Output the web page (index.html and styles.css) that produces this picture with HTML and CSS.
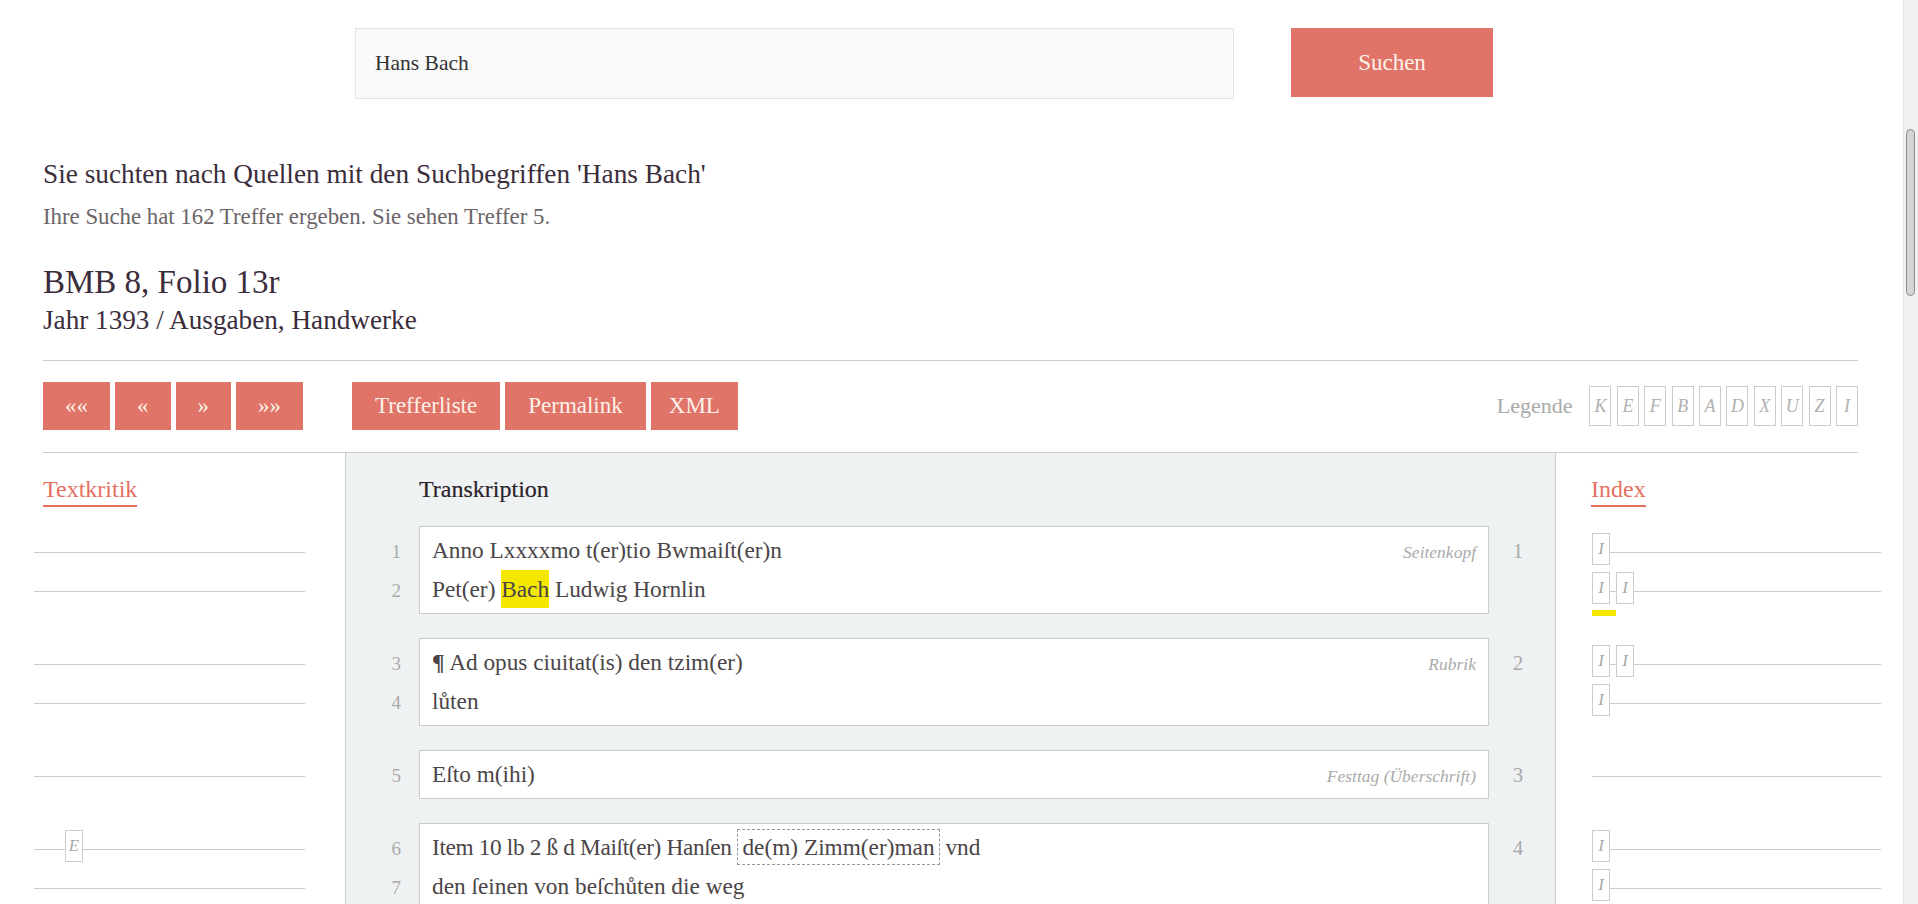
FILE: index.html
```html
<!DOCTYPE html>
<html lang="de">
<head>
<meta charset="utf-8">
<title>BMB 8, Folio 13r</title>
<link rel="stylesheet" href="styles.css">
</head>
<body>
<div class="page">
  <form class="search">
    <input class="search-field" type="text" value="Hans Bach">
    <button class="search-btn" type="button">Suchen</button>
  </form>

  <h1 class="query">Sie suchten nach Quellen mit den Suchbegriffen 'Hans Bach'</h1>
  <p class="hits">Ihre Suche hat 162 Treffer ergeben. Sie sehen Treffer 5.</p>

  <h2 class="doc-title">BMB 8, Folio 13r</h2>
  <p class="doc-sub">Jahr 1393 / Ausgaben, Handwerke</p>

  <div class="rule"></div>

  <div class="toolbar">
    <div class="btn-group">
      <a class="btn">««</a>
      <a class="btn">«</a>
      <a class="btn">»</a>
      <a class="btn">»»</a>
    </div>
    <div class="btn-group actions">
      <a class="btn">Trefferliste</a>
      <a class="btn">Permalink</a>
      <a class="btn btn-narrow">XML</a>
    </div>
    <div class="legend">
      <span class="legend-label">Legende</span>
      <div class="legend-boxes">
        <span class="legend-box">K</span>
        <span class="legend-box">E</span>
        <span class="legend-box">F</span>
        <span class="legend-box">B</span>
        <span class="legend-box">A</span>
        <span class="legend-box">D</span>
        <span class="legend-box">X</span>
        <span class="legend-box">U</span>
        <span class="legend-box">Z</span>
        <span class="legend-box">I</span>
      </div>
    </div>
  </div>

  <div class="edition">
    <!-- header row -->
    <div class="head side"><span class="tab">Textkritik</span></div>
    <div class="head middle"><span class="tr-title">Transkription</span></div>
    <div class="head side idx"><span class="tab">Index</span></div>

    <!-- segment 1 -->
    <div class="seg-side">
      <div class="tk-row"></div>
      <div class="tk-row"></div>
    </div>
    <div class="seg-mid">
      <div class="ln"><span>1</span><br><span>2</span></div>
      <div class="box">
        <div class="label"><span>Seitenkopf</span></div>
        Anno Lxxxxmo t(er)tio Bwmaiſt(er)n<br>
        Pet(er) <span class="hit">Bach</span> Ludwig Hornlin
      </div>
      <div class="rn"><span>1</span></div>
    </div>
    <div class="seg-side idx">
      <div class="ix-row"><span class="mark">I</span></div>
      <div class="ix-row"><span class="mark">I</span><span class="mark">I</span><span class="hit-bar"></span></div>
    </div>

    <!-- segment 2 -->
    <div class="seg-side">
      <div class="tk-row"></div>
      <div class="tk-row"></div>
    </div>
    <div class="seg-mid">
      <div class="ln"><span>3</span><br><span>4</span></div>
      <div class="box">
        <div class="label"><span>Rubrik</span></div>
        <span class="pilcrow">¶</span> Ad opus ciuitat(is) den tzim(er)<br>
        lůten
      </div>
      <div class="rn"><span>2</span></div>
    </div>
    <div class="seg-side idx">
      <div class="ix-row"><span class="mark">I</span><span class="mark">I</span></div>
      <div class="ix-row"><span class="mark">I</span></div>
    </div>

    <!-- segment 3 -->
    <div class="seg-side">
      <div class="tk-row"></div>
    </div>
    <div class="seg-mid">
      <div class="ln"><span>5</span></div>
      <div class="box">
        <div class="label"><span>Festtag (Überschrift)</span></div>
        Eſto m(ihi)
      </div>
      <div class="rn"><span>3</span></div>
    </div>
    <div class="seg-side idx">
      <div class="ix-row"></div>
    </div>

    <!-- segment 4 -->
    <div class="seg-side">
      <div class="tk-row"><span class="mark mark-e">E</span></div>
      <div class="tk-row"></div>
    </div>
    <div class="seg-mid">
      <div class="ln"><span>6</span><br><span>7</span></div>
      <div class="box">
        <span class="tight">Item 10 lb 2 ß d Maiſt(er) Hanſen</span> <span class="person">de(m) Zimm(er)man</span> vnd<br>
        den ſeinen von beſchůten die weg
      </div>
      <div class="rn"><span>4</span></div>
    </div>
    <div class="seg-side idx">
      <div class="ix-row"><span class="mark">I</span></div>
      <div class="ix-row"><span class="mark">I</span></div>
    </div>
  </div>
</div>
<div class="scrollbar"><div class="thumb"></div></div>
</body>
</html>
```
FILE: styles.css
```css
html, body {
  margin: 0;
  height: 904px;
  overflow: hidden;
}
body {
  display: flex;
  background: #fff;
  font-family: "Liberation Serif", "Times New Roman", serif;
  color: #3b2d3b;
}
.page {
  flex: 1;
  min-width: 0;
  padding: 28px 45px 0 43px;
}

/* search */
.search {
  display: flex;
  align-items: flex-start;
  gap: 57px;
  padding-left: 312px;
  margin: 0;
}
.search-field {
  width: 879px;
  height: 71px;
  box-sizing: border-box;
  border: 1px solid #e3e3e3;
  background: #f9f9f9;
  padding: 0 19px;
  font-family: "Liberation Serif", serif;
  font-size: 21.5px;
  color: #333;
  outline: none;
  margin: 0;
}
.search-btn {
  width: 202px;
  height: 69px;
  border: 0;
  background: #e07468;
  color: #fdf1e8;
  font-family: "Liberation Serif", serif;
  font-size: 23px;
  margin: 0;
  padding: 0;
}

/* headings */
.query {
  margin: 57px 0 0;
  font-size: 27.3px;
  line-height: 36px;
  font-weight: normal;
  color: #3b2d3b;
}
.hits {
  margin: 10px 0 0;
  font-size: 22.8px;
  line-height: 30px;
  color: #6b6568;
}
.doc-title {
  margin: 30px 0 0;
  font-size: 33px;
  line-height: 40px;
  font-weight: normal;
}
.doc-sub {
  margin: 0;
  font-size: 27.2px;
  line-height: 36px;
}
.rule {
  height: 1px;
  background: #cccccc;
  margin-top: 22px;
}

/* toolbar */
.toolbar {
  display: flex;
  align-items: center;
  margin: 21px 0 22px;
  height: 48px;
}
.btn-group {
  display: flex;
  gap: 5px;
}
.actions {
  margin-left: 49px;
}
.btn {
  display: flex;
  align-items: center;
  justify-content: center;
  height: 48px;
  padding: 0 22px;
  background: #e07468;
  color: #fdf1e8;
  font-size: 23px;
  white-space: nowrap;
}
.actions .btn {
  padding: 0 23px;
}
.actions .btn-narrow {
  padding: 0 18px;
}
.legend {
  margin-left: auto;
  display: flex;
  align-items: center;
}
.legend-label {
  font-size: 22px;
  color: #aaaaaa;
  margin-right: 17px;
}
.legend-boxes {
  display: flex;
  gap: 5.4px;
}
.legend-box {
  width: 22px;
  height: 40px;
  box-sizing: border-box;
  border: 1px solid #cccccc;
  display: flex;
  align-items: center;
  justify-content: center;
  font-style: italic;
  font-size: 18px;
  color: #b0b0b0;
}

/* edition grid */
.edition {
  display: grid;
  grid-template-columns: 302px 1211px 302px;
  border-top: 1px solid #cccccc;
}
.head {
  height: 73px;
  box-sizing: border-box;
  padding-top: 21px;
}
.side.idx, .seg-side.idx {
  padding-left: 35px;
}
.tab {
  display: inline-block;
  font-size: 24px;
  line-height: 30px;
  color: #e5705f;
  border-bottom: 2px solid #e5705f;
  padding-bottom: 1px;
}
.middle, .seg-mid {
  background: #eff2f3;
  border-left: 1px solid #cccccc;
  border-right: 1px solid #cccccc;
}
.head.middle {
  padding-left: 73px;
}
.tr-title {
  font-size: 24px;
  line-height: 30px;
  color: #2a2329;
  -webkit-text-stroke: 0.2px #2a2329;
}

.seg-mid {
  display: flex;
  align-items: flex-start;
  padding-bottom: 24px;
}
.ln {
  width: 55px;
  flex: none;
  text-align: right;
  padding-top: 5px;
  margin-right: 18px;
  font-size: 23.3px;
  line-height: 39px;
  color: #aaaaaa;
}
.ln span {
  font-size: 19px;
  line-height: 1;
}
.box {
  width: 1070px;
  flex: none;
  box-sizing: border-box;
  border: 1px solid #cccccc;
  background: #fff;
  padding: 4px 12px;
  font-size: 23.3px;
  line-height: 39px;
  color: #4b4548;
}
.label {
  float: right;
  color: #aaaaaa;
}
.label span {
  font-size: 17.5px;
  font-style: italic;
  line-height: 1;
}
.pilcrow {
  font-weight: bold;
}
.hit {
  background: #f4e800;
  padding: 6px 0;
}
.tight {
  letter-spacing: -0.35px;
}
.person {
  border: 1px dashed #999999;
  padding: 4px 4px;
}
.rn {
  width: 66px;
  flex: none;
  box-sizing: border-box;
  padding: 5px 8px 0 0;
  text-align: center;
  font-size: 23.3px;
  line-height: 39px;
  color: #aaaaaa;
}
.rn span {
  font-size: 21px;
  line-height: 1;
}

.seg-side {
  padding: 5px 0 29px;
}
.tk-row {
  height: 39px;
  width: 271px;
  margin-left: -9px;
  display: flex;
  align-items: flex-start;
  background: linear-gradient(#cccccc, #cccccc) 0 21px / 100% 1px no-repeat;
}
.ix-row {
  position: relative;
  height: 39px;
  margin-left: 1px;
  margin-right: -23px;
  display: flex;
  align-items: flex-start;
  gap: 6px;
  background: linear-gradient(#cccccc, #cccccc) 0 21px / 100% 1px no-repeat;
}
.mark {
  width: 18px;
  height: 32px;
  margin-top: 2px;
  box-sizing: border-box;
  border: 1px solid #cccccc;
  background: #fff;
  display: flex;
  align-items: center;
  justify-content: center;
  font-style: italic;
  font-size: 17px;
  color: #aaaaaa;
}
.mark-e {
  margin-left: 31px;
}
.hit-bar {
  position: absolute;
  left: 0;
  top: 40px;
  width: 24px;
  height: 6px;
  background: #f4e800;
}

/* scrollbar */
.scrollbar {
  width: 15px;
  flex: none;
  background: #f1f1f1;
  box-shadow: inset 1px 0 0 #e4e4e4;
  display: flex;
  justify-content: center;
  padding-top: 129px;
  box-sizing: border-box;
}
.thumb {
  width: 9px;
  height: 167px;
  box-sizing: border-box;
  border: 1px solid #8c8c8c;
  border-radius: 5px;
  background: #d4d4d4;
}
```
